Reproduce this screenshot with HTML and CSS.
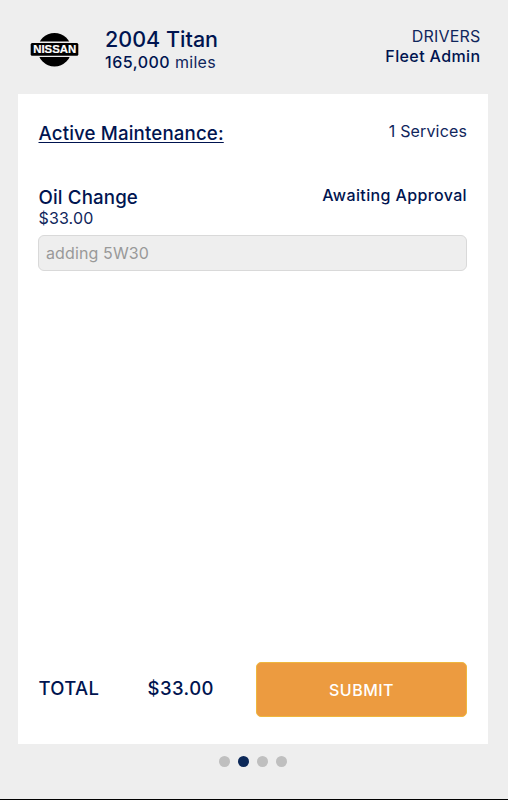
FILE: index.html
```html
<!DOCTYPE html>
<html lang="en">
<head>
<meta charset="utf-8">
<title>Active Maintenance</title>
<link rel="stylesheet" href="styles.css">
</head>
<body>
<div class="screen">
  <header class="header">
    <svg class="logo" viewBox="0 0 50 36" role="img" aria-label="Nissan">
      <circle cx="24.5" cy="17.7" r="16.8" fill="#000"/>
      <rect x="0" y="9.5" width="50" height="15.5" rx="1.5" fill="#eee"/>
      <rect x="0.7" y="11" width="47.6" height="12.8" rx="1.5" fill="#000"/>
      <text class="logo-text" x="3.2" y="21.3" textLength="43" lengthAdjust="spacingAndGlyphs">NISSAN</text>
    </svg>
    <div class="vehicle">
      <h1 class="vehicle-name">2004 Titan</h1>
      <div class="mileage"><b>165,000</b> miles</div>
    </div>
    <div class="driver">
      <div class="driver-label">DRIVERS</div>
      <div class="driver-name">Fleet Admin</div>
    </div>
  </header>
  <main class="card">
    <div class="row">
      <h2 class="title"><span class="underlined">Active Maintenance:</span></h2>
      <div class="count">1 Services</div>
    </div>
    <section class="service">
      <div class="row">
        <h3 class="title service-name">Oil Change</h3>
        <div class="status">Awaiting Approval</div>
      </div>
      <div class="price">$33.00</div>
      <div class="note">adding 5W30</div>
    </section>
    <footer class="footer">
      <div class="total-label">TOTAL</div>
      <div class="total">$33.00</div>
      <button class="submit">SUBMIT</button>
    </footer>
  </main>
  <nav class="dots">
    <svg class="dot-row" viewBox="0 0 68 11">
      <circle class="dot" cx="5.5" cy="5.5" r="5.5"/>
      <circle class="dot active" cx="24.5" cy="5.5" r="5.5"/>
      <circle class="dot" cx="43.5" cy="5.5" r="5.5"/>
      <circle class="dot" cx="62.5" cy="5.5" r="5.5"/>
    </svg>
  </nav>
</div>
</body>
</html>
```
FILE: styles.css
```css
* { box-sizing: border-box; }
body { margin: 0; }
.screen {
  width: 508px;
  height: 800px;
  background: #eee;
  border-bottom: 1px solid #000;
  font: 400 16px/20px Inter, sans-serif;
  color: #001450;
  display: flex;
  flex-direction: column;
  overflow: hidden;
}
h1, h2, h3 { margin: 0; }
.header {
  height: 94px;
  padding: 26px 27.5px 0 30px;
  display: flex;
  align-items: flex-start;
}
.logo { width: 50px; height: 36px; margin: 6px 25px 0 0; }
.logo-text { font: 700 10.5px "Liberation Sans", sans-serif; fill: #fff; stroke: #fff; stroke-width: .2px; }
.vehicle { flex: 1; }
.vehicle-name { font-size: 21.5px; line-height: 26px; font-weight: 500; letter-spacing: .02px; }
.mileage { color: #10265c; letter-spacing: .3px; }
.mileage b { font-weight: 550; color: #001450; letter-spacing: .5px; }
.driver { text-align: right; }
.driver-label { color: #10265c; letter-spacing: .2px; }
.driver-name { font-weight: 550; letter-spacing: .38px; }
.card {
  width: 470px;
  height: 650px;
  margin-left: 18px;
  padding: 26px 21px 27px 20.5px;
  background: #fff;
  display: flex;
  flex-direction: column;
}
.row { display: flex; justify-content: space-between; }
.title { height: 26px; font-size: 18.7px; line-height: 28px; font-weight: 500; letter-spacing: .14px; }
.underlined { text-decoration: underline; text-decoration-thickness: 1px; text-underline-offset: 2px; text-decoration-skip-ink: none; }
.count { margin-top: 1px; color: #10265c; letter-spacing: .15px; }
.service { margin-top: 38px; }
.service-name { height: 25px; }
.status { margin: 1px 0 0; font-weight: 550; letter-spacing: .37px; }
.price { margin-top: -1px; color: #10265c; letter-spacing: .15px; }
.note {
  height: 36px;
  margin: 7px 0 0 -.5px;
  padding: 7px;
  border: 1px solid #d9d9d9;
  border-radius: 6px;
  background: #eee;
  color: #999;
  letter-spacing: .12px;
}
.footer { display: flex; margin-top: auto; font-size: 18.5px; font-weight: 500; line-height: 53px; letter-spacing: .3px; }
.total-label { width: 109px; }
.total { flex: 1; letter-spacing: .45px; }
.submit {
  width: 211px;
  height: 55px;
  padding: 0;
  border: 1px solid #efb73e;
  border-radius: 5px;
  background: #ec9b40;
  color: #fff;
  font: 500 16px/20px Inter, sans-serif;
  letter-spacing: .5px;
}
.dots { display: flex; justify-content: center; margin: 12px 3px 0 0; }
.dot-row { width: 68px; height: 11px; }
.dot { fill: #bfbfbf; }
.active { fill: #0c2858; }
```
